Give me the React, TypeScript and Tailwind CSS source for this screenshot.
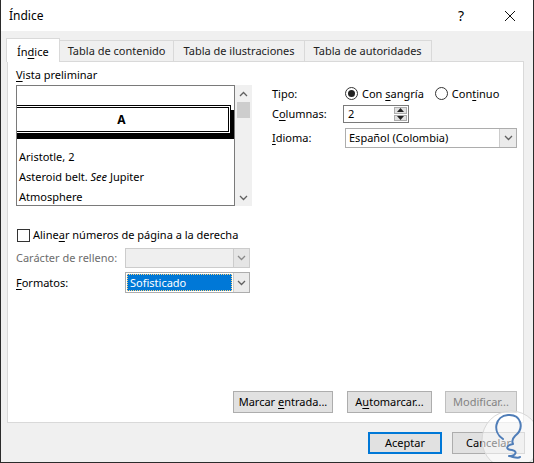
import React from 'react';

const U = ({ children }: { children: React.ReactNode }) => <span className="underline underline-offset-2">{children}</span>;

const Chevron = ({ up = false, color = '#606060' }: { up?: boolean; color?: string }) => (
  <svg width="9" height="6" viewBox="0 0 9 6" className="block">
    <path d={up ? 'M1 5 L4.5 1.5 L8 5' : 'M1 1 L4.5 4.5 L8 1'} fill="none" stroke={color} strokeWidth="1.3" />
  </svg>
);

const Radio = ({ on }: { on?: boolean }) => (
  <span className="w-[13px] h-[13px] rounded-full border border-[#333333] bg-white flex items-center justify-center shrink-0">
    {on && <span className="w-[7px] h-[7px] rounded-full bg-[#222222]" />}
  </span>
);

const Btn = ({ children, w, disabled = false, primary = false }: { children: React.ReactNode; w: string; disabled?: boolean; primary?: boolean }) => (
  <div
    className={
      'h-[22px] flex items-center justify-center bg-[#e1e1e1] ' +
      (primary ? 'border-2 border-[#0078d7] ' : 'border border-[#adadad] ') +
      (disabled ? 'text-[#838383] bg-[#cccccc]/40 border-[#bfbfbf] ' : 'text-black ') +
      w
    }
  >
    <span>{children}</span>
  </div>
);

const Watermark = () => (
  <svg className="absolute left-[478px] top-[408px]" width="62" height="62" viewBox="0 0 62 62">
    <circle cx="32" cy="32" r="29" fill="rgba(255,255,255,0.55)" stroke="#d8d8d8" strokeWidth="1" />
    <path
      d="M24 31 C13 24 16 8 29 7 C42 6 46 20 36 28 C33 31 33 34 34 36 C27 37 26 42 33 42 C39 43 37 48 30 48 C35 49 39 51 41 49"
      fill="none"
      stroke="#4f7db8"
      strokeWidth="2"
      strokeLinecap="round"
      strokeLinejoin="round"
    />
  </svg>
);

export default function App() {
  return (
    <div className="w-[534px] h-[463px] bg-[#f0f0f0] border-x border-b border-[#2b2b2b] flex flex-col relative overflow-hidden whitespace-nowrap font-['Noto_Sans',sans-serif] text-[11px] leading-[16px] text-black">
      {/* title bar */}
      <div className="h-[31px] bg-white flex items-center pl-[8px] shrink-0 text-[12px]">
        <span>Índice</span>
        <span className="ml-auto mr-[40px] text-[14px]">?</span>
        <svg width="12" height="12" viewBox="0 0 12 12" className="mr-[17px]">
          <path d="M1 1 L11 11 M11 1 L1 11" stroke="#111" strokeWidth="1" />
        </svg>
      </div>

      <div className="flex-1 flex flex-col pl-[5px] pr-[8px] pt-[7px]">
        {/* tabs */}
        <div className="flex items-end h-[23px] relative z-10">
          <div className="h-[24px] -mb-px bg-white border border-b-0 border-[#d9d9d9] px-[10px] pt-[2px] flex items-center">
            <span>
              Ín<U>d</U>ice
            </span>
          </div>
          <div className="h-[21px] border border-l-0 border-b-0 border-[#d9d9d9] px-[8px] flex items-center text-[#222]">Tabla de contenido</div>
          <div className="h-[21px] border border-l-0 border-b-0 border-[#d9d9d9] px-[9px] flex items-center text-[#222]">Tabla de ilustraciones</div>
          <div className="h-[21px] border border-l-0 border-b-0 border-[#d9d9d9] px-[9px] flex items-center text-[#222]">Tabla de autoridades</div>
        </div>

        {/* panel */}
        <div className="ml-[1px] w-[517px] h-[362px] bg-white border border-[#d9d9d9] flex flex-col pl-[8px] pr-[6px]">
          <div className="flex pt-[5px]">
            {/* left column */}
            <div className="w-[236px] flex flex-col">
              <div className="h-[16px]">
                <U>V</U>ista preliminar
              </div>
              <div className="flex mt-[2px] h-[121px]">
                <div className="w-[219px] border border-[#7a7a7a] overflow-hidden flex flex-col">
                  <div className="h-[19px] shrink-0" />
                  <div className="ml-[-5px] w-[219px] h-[29px] shrink-0 border-[3px] border-double border-black shadow-[4px_5px_0_0_#000] flex items-center justify-center font-bold text-[12px]">
                    A
                  </div>
                  <div className="mt-[13px] pl-[2px] flex flex-col">
                    <div className="h-[20px] flex items-center">Aristotle, 2</div>
                    <div className="h-[20px] flex items-center">
                      <span>
                        Asteroid belt. <i>See</i> Jupiter
                      </span>
                    </div>
                    <div className="h-[20px] flex items-center">Atmosphere</div>
                  </div>
                </div>
                <div className="w-[17px] bg-[#f0f0f0] flex flex-col items-center">
                  <div className="h-[17px] flex items-center justify-center">
                    <Chevron up />
                  </div>
                  <div className="w-[13px] h-[16px] bg-[#cdcdcd]" />
                  <div className="mt-auto h-[17px] flex items-center justify-center">
                    <Chevron />
                  </div>
                </div>
              </div>

              <div className="mt-[21px] h-[16px] flex items-center">
                <span className="w-[13px] h-[13px] border border-[#333333] bg-white ml-[1px] shrink-0" />
                <span className="ml-[3px]">
                  Aline<U>a</U>r números de página a la derecha
                </span>
              </div>

              <div className="mt-[5px] h-[20px] flex items-center">
                <span className="w-[109px] text-[#6d6d6d]">Carácter de relleno:</span>
                <div className="w-[125px] h-[20px] border border-[#cccccc] bg-[#efefef] flex">
                  <div className="flex-1" />
                  <div className="w-[16px] border-l border-[#cccccc] bg-[#e5e5e5] flex items-center justify-center">
                    <Chevron color="#8a8a8a" />
                  </div>
                </div>
              </div>

              <div className="mt-[4px] h-[21px] flex items-center">
                <span className="w-[109px]">
                  <U>F</U>ormatos:
                </span>
                <div className="w-[125px] h-[21px] border border-[#adadad] bg-white flex">
                  <div className="flex-1 p-[1px]">
                    <div className="h-full bg-[#0078d7] text-white border border-dotted border-[#ffd27a] pl-[2px] flex items-center">
                      Sofisticado
                    </div>
                  </div>
                  <div className="w-[16px] border-l border-[#cccccc] bg-[#ebebeb] flex items-center justify-center">
                    <Chevron />
                  </div>
                </div>
              </div>
            </div>

            {/* right column */}
            <div className="ml-[20px] pt-[18px] flex flex-col">
              <div className="h-[17px] flex items-center">
                <span className="w-[73px]">Tipo:</span>
                <Radio on />
                <span className="ml-[4px]">
                  Con <U>s</U>angría
                </span>
                <span className="ml-[11px]">
                  <Radio />
                </span>
                <span className="ml-[4px]">
                  Con<U>t</U>inuo
                </span>
              </div>
              <div className="mt-[3px] h-[18px] flex items-center">
                <span className="w-[71px]">
                  C<U>o</U>lumnas:
                </span>
                <div className="w-[66px] h-[18px] border border-[#7a7a7a] bg-white flex">
                  <span className="flex-1 pl-[4px] flex items-center">2</span>
                  <div className="w-[15px] flex flex-col p-[1px] gap-[1px]">
                    <div className="flex-1 bg-[#e1e1e1] border border-[#adadad] flex items-center justify-center">
                      <svg width="7" height="4" viewBox="0 0 7 4"><path d="M0 4 L3.5 0 L7 4 Z" fill="#222" /></svg>
                    </div>
                    <div className="flex-1 bg-[#e1e1e1] border border-[#adadad] flex items-center justify-center">
                      <svg width="7" height="4" viewBox="0 0 7 4"><path d="M0 0 L3.5 4 L7 0 Z" fill="#222" /></svg>
                    </div>
                  </div>
                </div>
              </div>
              <div className="mt-[5px] h-[20px] flex items-center">
                <span className="w-[73px]">
                  <U>I</U>dioma:
                </span>
                <div className="w-[172px] h-[20px] border border-[#adadad] bg-white flex">
                  <span className="flex-1 pl-[3px] flex items-center">Español (Colombia)</span>
                  <div className="w-[17px] border-l border-[#cccccc] bg-[#ebebeb] flex items-center justify-center">
                    <Chevron />
                  </div>
                </div>
              </div>
            </div>
          </div>

          <div className="mt-auto mb-[9px] flex justify-end">
            <Btn w="w-[100px]">
              Marcar <U>e</U>ntrada...
            </Btn>
            <div className="w-[14px]" />
            <Btn w="w-[85px]">
              A<U>u</U>tomarcar...
            </Btn>
            <div className="w-[13px]" />
            <Btn w="w-[72px]" disabled>
              Modificar...
            </Btn>
          </div>
        </div>

        {/* bottom buttons */}
        <div className="mt-[9px] flex justify-end gap-[10px]">
          <Btn w="w-[74px]" primary>
            Aceptar
          </Btn>
          <Btn w="w-[73px]">Cancelar</Btn>
        </div>
      </div>

      <Watermark />
    </div>
  );
}
